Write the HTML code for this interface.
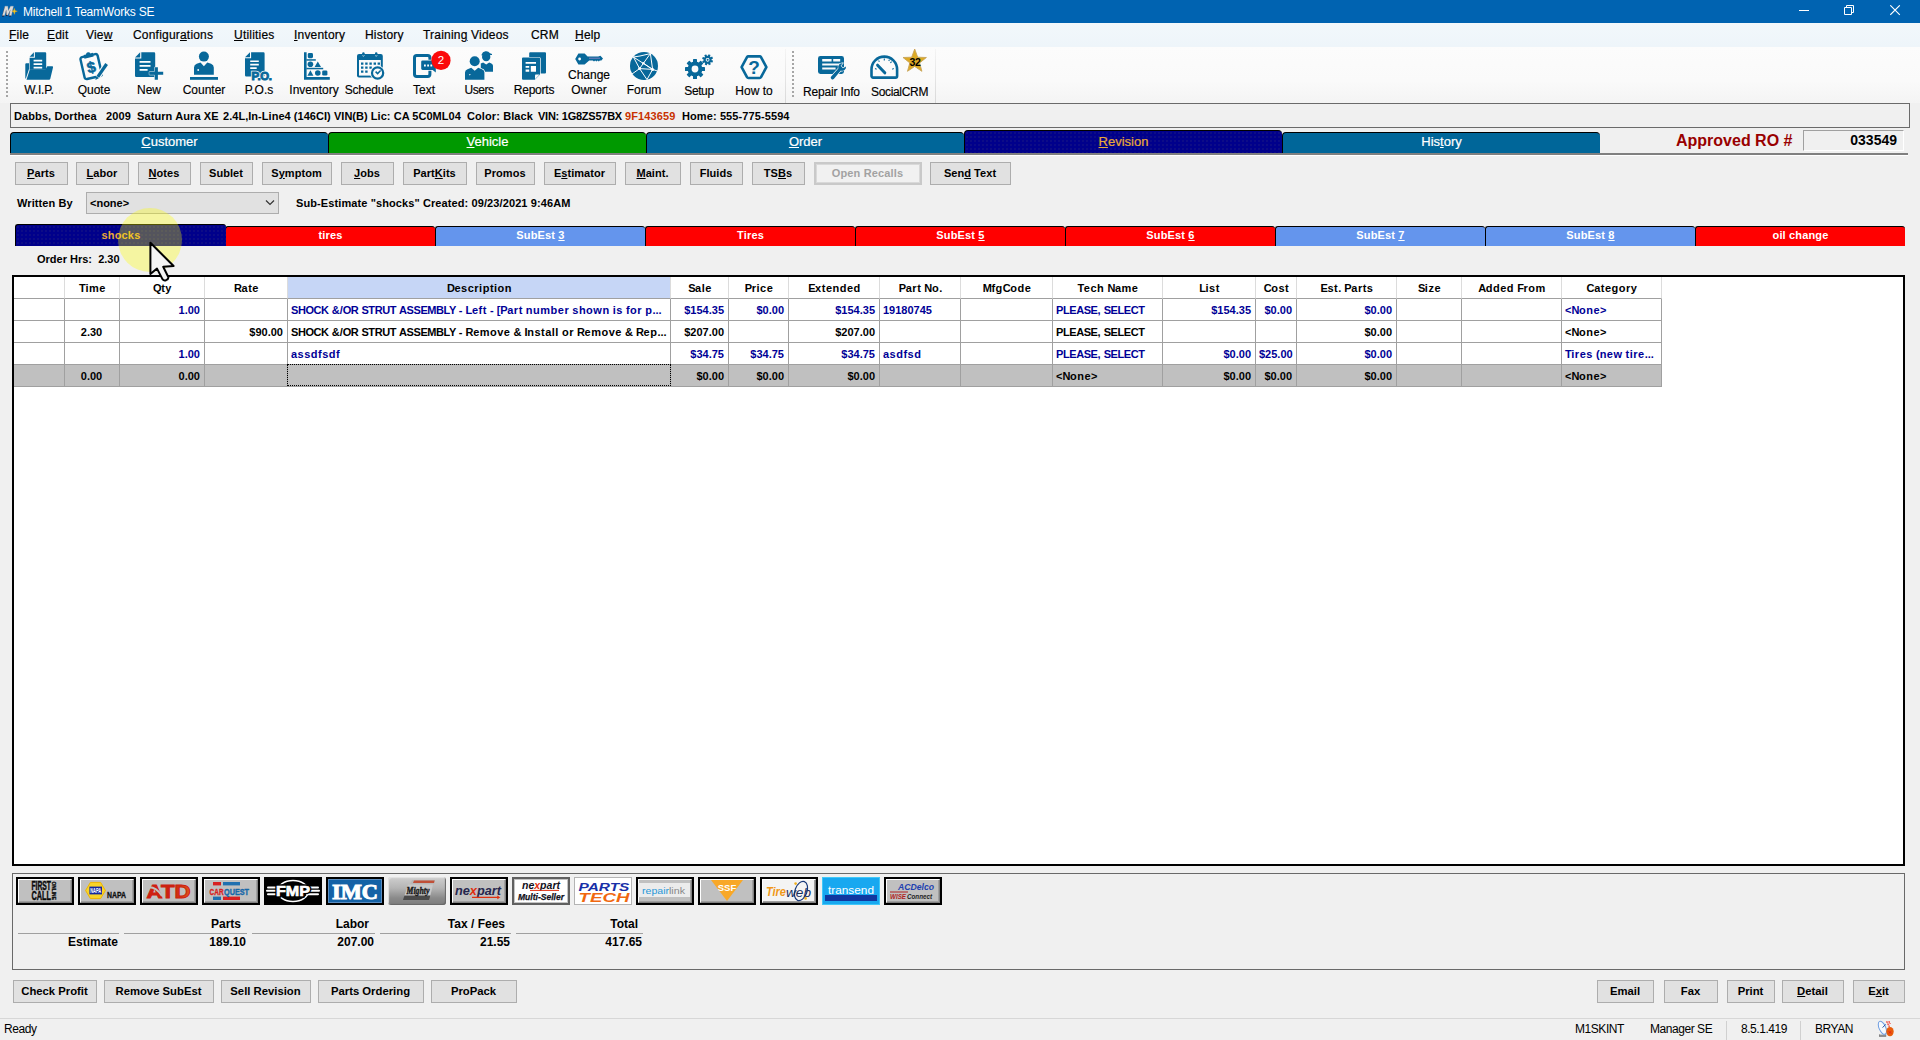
<!DOCTYPE html>
<html lang="en">
<head>
<meta charset="utf-8">
<title>Mitchell 1 TeamWorks SE</title>
<style>
*{box-sizing:border-box;margin:0;padding:0}
html,body{width:1920px;height:1040px;overflow:hidden}
body{position:relative;background:#f0f0f0;font-family:"Liberation Sans",Arial,sans-serif;font-size:11px;color:#000}
.abs{position:absolute}
u{text-decoration:underline;text-underline-offset:1px}
/* title bar */
#title{position:absolute;left:0;top:0;width:1920px;height:23px;background:#0063b1;color:#fff}
#title .cap{position:absolute;left:23px;top:5px;font-size:12px;line-height:14px;white-space:nowrap;letter-spacing:-0.22px}
/* menu */
#menu{position:absolute;left:0;top:23px;width:1920px;height:24px;background:linear-gradient(#f2f8fb,#eef5fa)}
#menu span{position:absolute;top:5px;font-size:12px;line-height:14px;white-space:nowrap;letter-spacing:.2px;-webkit-text-stroke:.2px #000}
/* toolbar */
#toolbar{position:absolute;left:0;top:47px;width:1920px;height:56px;background:linear-gradient(#fcfcfc,#fafafa 60%,#f4f4f4)}
#toolbar .ic{position:absolute;overflow:visible}
#toolbar .lbl{position:absolute;top:36px;width:56px;font-size:12px;line-height:14px;white-space:nowrap;text-align:center;-webkit-text-stroke:.15px #000}
.grip{position:absolute;width:2px;background:repeating-linear-gradient(#a6a6a6 0 2px,transparent 2px 4px)}
.tbsep{position:absolute;top:2px;width:1px;height:54px;background:linear-gradient(#f4f4f4,#d8d8d8)}
/* info */
#info{position:absolute;left:10px;top:103px;width:1900px;height:25px;border:1px solid #6a6a6a;border-right-color:#6a6a6a;background:#f0f0f0}
#info span{position:absolute;top:6px;letter-spacing:.1px;line-height:13px;font-weight:bold;font-size:11px;white-space:nowrap}
/* main tabs */
.mtab{-webkit-text-stroke:.2px currentColor;position:absolute;top:132px;height:21px;color:#fff;font-size:13px;line-height:17px;text-align:center;border-top:1px solid #000;border-left:1px solid #000;border-top-left-radius:4px;border-top-right-radius:4px}
.mtab.sel{top:130px;height:23px;line-height:21px;background-color:#00008b;background-image:radial-gradient(circle,rgba(150,140,90,.5) 0.5px,transparent 0.75px);background-size:4px 4px;color:#e8a838;z-index:2}
.tabline{position:absolute;left:10px;top:153px;width:1898px;height:3px;background:linear-gradient(#808080 0 66%,#fff 66%)}
.stab.sel{background-color:#00008b;background-image:radial-gradient(circle,rgba(150,140,90,.5) 0.5px,transparent 0.75px);background-size:4px 4px;color:#e8a838;z-index:2}
.btn.dis{border:2px solid #c9c9c9;box-shadow:inset 0 0 0 1px #d9d9d9;background:#f1f1f1;color:#a2a2a2;line-height:19px;letter-spacing:.15px}
/* buttons */
.btn{position:absolute;height:23px;border:1px solid #adadad;background:#e1e1e1;font-weight:bold;font-size:11px;line-height:21px;text-align:center;white-space:nowrap;text-indent:-1px;letter-spacing:.05px}
.btn2{position:absolute;height:23px;border:1px solid #adadad;background:#e1e1e1;font-weight:bold;font-size:11.3px;line-height:20px;text-align:center;white-space:nowrap;text-indent:-1px}
/* sub tabs */
.stab{position:absolute;top:226px;height:20px;width:210px;color:#fff;font-weight:bold;font-size:11px;line-height:16px;letter-spacing:.15px;text-align:center;border-top:1px solid #000;border-left:1px solid #000;border-top-left-radius:3px;border-top-right-radius:3px}
#panel{position:absolute;left:12px;top:873px;width:1893px;height:97px;border:1px solid #696969}
.vb{position:absolute;top:3px;width:58px;height:28px;background:#000}
.vb i{position:absolute;left:2px;top:2px;width:54px;height:24px;background:#c0c0c0;border:1px solid;border-color:#fff #808080 #808080 #fff;box-shadow:inset -1px -1px 0 #a0a0a0}
.vb svg{position:absolute;left:2px;top:2px;width:54px;height:24px}
.tl{position:absolute;top:59px;height:1px;background:#a0a0a0}
.tt{position:absolute;text-align:right;font-weight:bold;font-size:12px;line-height:14px;white-space:nowrap}
#status{position:absolute;left:0;top:1018px;width:1920px;height:22px;border-top:1px solid #d7d7d7;background:#f0f0f0}
#status span{position:absolute;top:3px;font-size:12px;line-height:14px;white-space:nowrap;letter-spacing:-.45px}
/* grid */
#grid{position:absolute;left:12px;top:275px;width:1893px;height:591px;background:#fff;border:2px solid #000}
.cell{position:absolute;height:22px;line-height:23px;font-weight:bold;font-size:11px;white-space:nowrap;overflow:hidden;border-right:1px solid #a0a0a0;border-bottom:1px solid #a0a0a0;padding:0 4px 0 3px}
.hd{text-align:center;padding:0 3px 0 4px;border-right:1px solid #dcdcdc;border-bottom:1px solid #a0a0a0}
b{font-weight:inherit}
.gu{letter-spacing:-.42px}
.gl{letter-spacing:.5px}
.lu{letter-spacing:-.3px}
.ll{letter-spacing:.3px}
.r{text-align:right}
.c{text-align:center}
.b{color:#000096}
.g{background:#c0c0c0}
</style>
</head>
<body>
<div id="title">
<svg class="abs" style="left:2px;top:5px" width="16" height="12" viewBox="0 0 16 12"><path d="M0.4 11L3 1.6H5.8L6.2 6.2L8.6 1.6H11.4L9.4 11H7.2L8.4 5.2L5.8 10.4H4.6L4.2 5.2L2.6 11Z" fill="#101030" transform="translate(-.5 .5)"/><path d="M0.4 10.6L3 1.2H5.8L6.2 5.8L8.6 1.2H11.4L9.4 10.6H7.2L8.4 4.8L5.8 10H4.6L4.2 4.8L2.6 10.6Z" fill="#dcdcdc" stroke="#b8b8b8" stroke-width=".3"/><path d="M12.4 3.2L13 5.4L15.4 6.2L13 7L12.4 9.4L11.6 7L9.8 6.2L11.6 5.4Z" fill="#f6c81c" stroke="#e8a020" stroke-width=".3"/></svg>
<span class="cap">Mitchell 1 TeamWorks SE</span>
<svg class="abs" style="left:1799px;top:5px" width="12" height="12" viewBox="0 0 12 12"><path d="M0 5.5H10" stroke="#fff" stroke-width="1" fill="none"/></svg>
<svg class="abs" style="left:1844px;top:5px" width="12" height="12" viewBox="0 0 12 12"><path d="M0.5 2.5H7.5V9.5H0.5Z M2.5 2.5V0.5H9.5V7.5H7.5" stroke="#fff" stroke-width="1" fill="none"/></svg>
<svg class="abs" style="left:1890px;top:5px" width="12" height="12" viewBox="0 0 12 12"><path d="M0.3 0.3L9.8 9.8M9.8 0.3L0.3 9.8" stroke="#fff" stroke-width="1.1" fill="none"/></svg>
</div>
<div id="menu">
<span style="left:9px"><u>F</u>ile</span>
<span style="left:47px"><u>E</u>dit</span>
<span style="left:86px">Vie<u>w</u></span>
<span style="left:133px">Configur<u>a</u>tions</span>
<span style="left:234px"><u>U</u>tilities</span>
<span style="left:294px"><u>I</u>nventory</span>
<span style="left:365px">History</span>
<span style="left:423px">Trainin<u>g</u> Videos</span>
<span style="left:531px">CRM</span>
<span style="left:575px"><u>H</u>elp</span>
</div>
<div id="toolbar">
<div class="grip" style="left:6px;top:4px;height:46px"></div>
<div class="tbsep" style="left:785px"></div>
<div class="grip" style="left:792px;top:4px;height:46px"></div>
<div class="tbsep" style="left:935px"></div>
<!-- W.I.P. -->
<svg class="ic" style="left:25px;top:5px" width="28" height="28" viewBox="0 0 28 28"><g fill="#08689a">
<path d="M0.3 12.3a1 1 0 0 1 1-1H4V17L0.9 26.5H0.3Z"/>
<path d="M9.9 0.3H20.2a1 1 0 0 1 1 1V17.6H4.6V5.7H9.9Z"/>
<path d="M4.6 4.7L8.9 0.3V4.7Z"/>
<path d="M4.9 17.3H20.6L22.3 14.3H27a1 1 0 0 1 1 1.3L25.3 26.8a1.4 1.4 0 0 1-1.3 1H1.5Z"/>
</g><path d="M8.6 7.8h8.6v1.7H8.6zM8.6 11.3h8.6v1.7H8.6zM8.6 14.8h8.6v1.7H8.6z" fill="#fff"/></svg>
<span class="lbl" style="left:11px;letter-spacing:-.2px">W.I.P.</span>
<!-- Quote -->
<svg class="ic" style="left:80px;top:4px" width="28" height="30" viewBox="0 0 28 30"><g transform="rotate(-13 11 15)">
<rect x="2.2" y="4.4" width="17.6" height="22.4" rx="2" fill="none" stroke="#08689a" stroke-width="2.4"/>
<path d="M6.3 2.6h2.4a2.4 2.4 0 0 1 4.6 0h2.4v3.8H6.3z" fill="#08689a"/>
<text x="11" y="21.8" font-family="Liberation Sans,sans-serif" font-weight="bold" font-size="15.5" text-anchor="middle" fill="#08689a" stroke="#08689a" stroke-width=".5">$</text></g>
<path d="M26.4 13.4L17.6 26.2" stroke="#fafafa" stroke-width="5.4"/><path d="M26.6 13L17.8 25.8" stroke="#08689a" stroke-width="3.2"/><path d="M15.4 29L16.2 25.4L18.8 27.2Z" fill="#08689a"/></svg>
<span class="lbl" style="left:66px">Quote</span>
<!-- New -->
<svg class="ic" style="left:135px;top:5px" width="29" height="28" viewBox="0 0 29 28"><g fill="#08689a">
<path d="M6.3 0.2H19a1.2 1.2 0 0 1 1.2 1.2V23.8a1.2 1.2 0 0 1-1.2 1.2H1.2A1.2 1.2 0 0 1 0 23.8V6.5H6.3Z"/>
<path d="M0 5.4L5.2 0.2V5.4Z"/></g>
<path d="M4.6 8.9h10.9v1.8H4.6zM4.6 13h10.9v1.8H4.6zM4.6 17h8v1.8H4.6z" fill="#fff"/>
<path d="M19.7 15.2h3.2v4.6h5.3v3h-5.3v5h-3.2v-5h-5.4v-3h5.4z" fill="#08689a" stroke="#fafafa" stroke-width="0.9" paint-order="stroke"/></svg>
<span class="lbl" style="left:121px">New</span>
<!-- Counter -->
<svg class="ic" style="left:190px;top:5px" width="28" height="28" viewBox="0 0 28 28"><g fill="#08689a">
<circle cx="13.9" cy="4.6" r="5"/>
<path d="M4 22.7V15.5a4 4 0 0 1 2.7-3.8L10.5 10.6L13.9 14.2L17.3 10.6L21.1 11.7a4 4 0 0 1 2.7 3.8V22.7Z"/>
<rect x="0" y="25" width="28" height="2.8"/></g>
<circle cx="8.2" cy="18" r="0.9" fill="#fff"/></svg>
<span class="lbl" style="left:176px">Counter</span>
<!-- P.O.s -->
<svg class="ic" style="left:245px;top:5px" width="29" height="28" viewBox="0 0 29 28"><g fill="#08689a">
<path d="M6.1 0.2H18.4a1.2 1.2 0 0 1 1.2 1.2V23.2a1.2 1.2 0 0 1-1.2 1.2H1.2A1.2 1.2 0 0 1 0 23.2V6.3H6.1Z"/>
<path d="M0 5.2L5 0.2V5.2Z"/></g>
<path d="M5.2 8.4h8.6v1.7H5.2zM5.2 11.8h8.6v1.7H5.2zM5.2 15.2h6.5v1.7H5.2z" fill="#fff"/>
<text x="6.6" y="27.8" font-family="Liberation Sans,sans-serif" font-weight="bold" font-size="11.4" letter-spacing="-0.3" stroke="#fafafa" stroke-width="2.4" fill="#fafafa">P.O.</text><text x="6.6" y="27.8" font-family="Liberation Sans,sans-serif" font-weight="bold" font-size="11.4" letter-spacing="-0.3" fill="#08689a" stroke="#08689a" stroke-width=".9">P.O.</text></svg>
<span class="lbl" style="left:231px">P.O.s</span>
<!-- Inventory -->
<svg class="ic" style="left:304px;top:5px" width="26" height="28" viewBox="0 0 26 28"><g fill="#08689a">
<path d="M0 0.3H2.6V25H25.8V27.8H0Z"/>
<rect x="2.4" y="7.2" width="9.4" height="1.5"/><rect x="2.4" y="15.8" width="16.8" height="1.5"/>
<rect x="3.8" y="1" width="5.2" height="5.2" rx="1.4"/>
<circle cx="6.4" cy="12.2" r="2.8"/><path d="M10.6 15L13.8 9.4L17 15Z"/>
<path d="M3.4 23.8L6.4 18.2L9.4 23.8Z"/><circle cx="13.8" cy="21" r="2.8"/><rect x="18.2" y="18.4" width="5.2" height="5.2" rx="1.4"/>
</g></svg>
<span class="lbl" style="left:286px">Inventory</span>
<!-- Schedule -->
<svg class="ic" style="left:357px;top:5px" width="29" height="29" viewBox="0 0 29 29"><g fill="#08689a">
<path d="M2 2H23.8a2 2 0 0 1 2 2V23.5a2 2 0 0 1-2 2H2a2 2 0 0 1-2-2V4a2 2 0 0 1 2-2Z"/>
<rect x="5.2" y="0.2" width="2.4" height="4.6" rx="1.1"/><rect x="18" y="0.2" width="2.4" height="4.6" rx="1.1"/></g>
<rect x="2" y="8" width="21.8" height="15.6" fill="#fafafa"/>
<path d="M4 10.4h2.4v2.4H4zM8.2 10.4h2.4v2.4H8.2zM12.4 10.4h2.4v2.4h-2.4zM16.6 10.4H19v2.4h-2.4zM20.6 10.4H23v2.4h-2.4zM4 14.4h2.4v2.4H4zM8.2 14.4h2.4v2.4H8.2zM12.4 14.4h2.4v2.4h-2.4zM4 18.4h2.4v2.4H4zM8.2 18.4h2.4v2.4H8.2z" fill="#08689a"/>
<path d="M5.6 3.4L6.4 4.4L7.4 3.2M18.4 3.4L19.2 4.4L20.2 3.2" stroke="#fafafa" stroke-width=".7" fill="none"/>
<circle cx="20.6" cy="21" r="7.6" fill="#fafafa"/><circle cx="20.6" cy="21" r="5.6" fill="#fafafa" stroke="#08689a" stroke-width="2.2"/>
<path d="M18.6 19.6L20.6 21.6L23.6 18.4" stroke="#08689a" stroke-width="1.5" fill="none"/></svg>
<span class="lbl" style="left:341px;letter-spacing:-.2px">Schedule</span>
<!-- Text -->
<svg class="ic" style="left:413px;top:5px" width="40" height="29" viewBox="0 0 40 29">
<rect x="1.5" y="3.5" width="15.4" height="21" rx="2.2" fill="none" stroke="#08689a" stroke-width="3"/>
<path d="M9.6 8.4H21.4a1.4 1.4 0 0 1 1.4 1.4V20.4L19.6 18H9.6a1.4 1.4 0 0 1-1.4-1.4V9.8a1.4 1.4 0 0 1 1.4-1.4Z" fill="#08689a" stroke="#fafafa" stroke-width="1.4" paint-order="stroke"/>
<path d="M11 12.6h1.8v1.8H11zM14.2 12.6H16v1.8h-1.8zM17.4 12.6h1.8v1.8h-1.8z" fill="#fff"/>
<circle cx="28" cy="8.4" r="9.6" fill="#fb0a0a"/>
<text x="28" y="12.4" font-family="Liberation Sans,sans-serif" font-size="11.5" text-anchor="middle" fill="#fff">2</text></svg>
<span class="lbl" style="left:396px">Text</span>
<!-- Users -->
<svg class="ic" style="left:465px;top:5px" width="28" height="28" viewBox="0 0 28 28"><g fill="#08689a">
<circle cx="21.2" cy="5" r="4.2"/><path d="M16.6 2.6a4.8 4.8 0 0 1 8.4-1.4l2 0.8v0.9L16.6 3.4Z"/>
<path d="M15.8 11.6L18.2 10.4L21.2 12.6L24.2 10.4L26.4 11.4a2.6 2.6 0 0 1 1.6 2.4V19.8H15.8Z"/>
<g stroke="#fafafa" stroke-width="1.3" paint-order="stroke"><circle cx="9.7" cy="9.2" r="5"/>
<path d="M0 27.8V20.6a3.6 3.6 0 0 1 2.5-3.4L6.2 15.8L9.7 18.8L13.2 15.8L16.9 17.2a3.6 3.6 0 0 1 2.5 3.4V27.8Z"/></g></g>
<path d="M3.8 22.2h2l-1 1.4z" fill="#fff"/></svg>
<span class="lbl" style="left:451px;letter-spacing:-.5px">Users</span>
<!-- Reports -->
<svg class="ic" style="left:522px;top:5px" width="25" height="28" viewBox="0 0 25 28"><g fill="#08689a">
<path d="M8.2 0.3H23a1 1 0 0 1 1 1V20.5a1 1 0 0 1-1 1H7.2V1.3a1 1 0 0 1 1-1Z"/>
<path d="M1 5.6H17a1 1 0 0 1 1 1V22.6L12.8 27.8H1a1 1 0 0 1-1-1V6.6a1 1 0 0 1 1-1Z" stroke="#fafafa" stroke-width="1.4" paint-order="stroke"/></g>
<path d="M3.6 10h10.4v1.8H3.6zM3.6 14h3.6v1.8H3.6zM8.8 14H14v5.8H8.8zM3.6 17.6h3.6v2.2H3.6z" fill="#fff"/>
<path d="M13 27.2V23.4a.8 .8 0 0 1 .8-.8h3.8Z" fill="#fafafa"/></svg>
<span class="lbl" style="left:506px;letter-spacing:-.25px">Reports</span>
<!-- Change Owner -->
<svg class="ic" style="left:575px;top:6px" width="28" height="12" viewBox="0 0 28 12"><g fill="#08689a">
<path d="M3.4 0.4H9.6L12.6 3.6H23.2L25.4 2.8L28 5.4L26.4 7.4H24.8L23.8 8.4L22.6 7.4L21.4 8.4L20.2 7.4L19 8.4L17.8 7.4H14.2L9.6 11.6H3.4L0.2 6Z"/></g>
<circle cx="4.6" cy="6" r="1.4" fill="#fff"/><path d="M14 5.2H25" stroke="#b48ad0" stroke-width=".7"/></svg>
<span class="lbl" style="left:561px;top:21px">Change</span>
<span class="lbl" style="left:561px">Owner</span>
<!-- Forum -->
<svg class="ic" style="left:630px;top:5px" width="28" height="28" viewBox="0 0 28 28">
<circle cx="14" cy="14" r="14" fill="#08689a"/>
<g stroke="#fff" stroke-width="1" fill="none"><path d="M3.4 5L22.6 17.4M22.6 17.4L20.4 1.6M20.4 1.6L9.6 16.6M9.6 16.6L22.6 17.4M9.6 16.6L2 22M9.6 16.6L3.4 5M22.6 17.4L17 27.6M20.4 1.6L10 4M22.6 17.4L27.4 19M9.6 16.6L17 27.6M3.4 5L10 4M13.4 11.2L22.6 17.4"/></g>
<g fill="#fff"><circle cx="22.6" cy="17.4" r="1.5"/><circle cx="9.6" cy="16.6" r="1.4"/><circle cx="13.4" cy="11.2" r="1.2"/></g></svg>
<span class="lbl" style="left:616px">Forum</span>
<!-- Setup -->
<svg class="ic" style="left:685px;top:7px" width="28" height="25" viewBox="0 0 28 25">
<g transform="translate(10 15)"><circle r="5.4" fill="none" stroke="#08689a" stroke-width="4"/>
<g fill="#08689a"><rect x="-2" y="-10" width="4" height="5" rx=".6"/><rect x="-2" y="-10" width="4" height="5" rx=".6" transform="rotate(45)"/><rect x="-2" y="-10" width="4" height="5" rx=".6" transform="rotate(90)"/><rect x="-2" y="-10" width="4" height="5" rx=".6" transform="rotate(135)"/><rect x="-2" y="-10" width="4" height="5" rx=".6" transform="rotate(180)"/><rect x="-2" y="-10" width="4" height="5" rx=".6" transform="rotate(225)"/><rect x="-2" y="-10" width="4" height="5" rx=".6" transform="rotate(270)"/><rect x="-2" y="-10" width="4" height="5" rx=".6" transform="rotate(315)"/></g></g>
<g transform="translate(22.6 5.8) rotate(20)"><circle r="2.9" fill="none" stroke="#08689a" stroke-width="2.1"/><circle r="1" fill="#08689a"/>
<g fill="#08689a"><rect x="-1.1" y="-5.5" width="2.2" height="2.6" rx=".4"/><rect x="-1.1" y="-5.5" width="2.2" height="2.6" rx=".4" transform="rotate(45)"/><rect x="-1.1" y="-5.5" width="2.2" height="2.6" rx=".4" transform="rotate(90)"/><rect x="-1.1" y="-5.5" width="2.2" height="2.6" rx=".4" transform="rotate(135)"/><rect x="-1.1" y="-5.5" width="2.2" height="2.6" rx=".4" transform="rotate(180)"/><rect x="-1.1" y="-5.5" width="2.2" height="2.6" rx=".4" transform="rotate(225)"/><rect x="-1.1" y="-5.5" width="2.2" height="2.6" rx=".4" transform="rotate(270)"/><rect x="-1.1" y="-5.5" width="2.2" height="2.6" rx=".4" transform="rotate(315)"/></g></g></svg>
<span class="lbl" style="left:671px;top:37px;letter-spacing:-.4px">Setup</span>
<!-- How to -->
<svg class="ic" style="left:740px;top:8px" width="28" height="25" viewBox="0 0 28 25">
<path d="M1.6 12.2L7 2.2a1.6 1.6 0 0 1 1.4-.8H19.6a1.6 1.6 0 0 1 1.4.8L26.4 12.2L21 22.2a1.6 1.6 0 0 1-1.4.8H8.4a1.6 1.6 0 0 1-1.4-.8Z" fill="none" stroke="#08689a" stroke-width="2.6" stroke-linejoin="round"/>
<text x="14" y="19.2" font-family="Liberation Sans,sans-serif" font-weight="bold" font-size="19" text-anchor="middle" fill="#08689a">?</text></svg>
<span class="lbl" style="left:726px;top:37px">How to</span>
<!-- Repair Info -->
<svg class="ic" style="left:818px;top:9px" width="29" height="26" viewBox="0 0 29 26">
<rect x="1.2" y="1.2" width="23.6" height="15.6" rx="1.2" fill="none" stroke="#08689a" stroke-width="2.4"/>
<rect x="2" y="2" width="22" height="14" fill="#08689a"/>
<path d="M4.2 3H13.6V5.6H4.2zM15.2 3H22.2V5.6H15.2zM4.2 7.6H22.2V9.5H4.2zM4.2 11.6H17.6V13.5H4.2z" fill="#fafafa"/>
<path d="M28 10.4a4 4 0 0 1-5.2 4.2L16 22.8a1.8 1.8 0 0 1-2.8-2.4L20.4 12.4a4 4 0 0 1 4.4-5.2L22.6 9.8L25 12.2Z" fill="#08689a" stroke="#fafafa" stroke-width="1.2" paint-order="stroke"/></svg>
<span class="lbl" style="left:803px;top:38px;letter-spacing:-.17px">Repair Info</span>
<!-- SocialCRM -->
<svg class="ic" style="left:870px;top:8px" width="29" height="25" viewBox="0 0 29 25">
<path d="M1.5 21V14.4A12.8 12.8 0 0 1 27.1 14.4V21a1.6 1.6 0 0 1-1.6 1.6H3.1A1.6 1.6 0 0 1 1.5 21Z" fill="none" stroke="#08689a" stroke-width="2.6" stroke-linejoin="round"/>
<path d="M7.6 10.2L14.8 17.8" stroke="#08689a" stroke-width="3" stroke-linecap="round"/>
<path d="M14.3 3.6V5.4M5 13.6L6.6 14.2M21.6 6.6L20.4 8M23.8 13.6L22.2 14.2M8.6 5.4L9.4 6.8M19.4 4.6L18.8 6" stroke="#08689a" stroke-width="1.1"/></svg>
<svg class="ic" style="left:900px;top:-1px" width="30" height="30" viewBox="0 0 30 30">
<path d="M14.7 3.0L17.7 11.2L26.4 11.5L19.6 16.9L21.9 25.3L14.7 20.4L7.5 25.3L9.8 16.9L3.0 11.5L11.7 11.2Z" fill="#ddaa24" stroke="#c8a458" stroke-width=".9" stroke-linejoin="round"/>
<text x="14.9" y="19.6" font-family="Liberation Sans,sans-serif" font-weight="bold" font-size="10.5" text-anchor="middle" fill="#000" letter-spacing="-.4">32</text></svg>
<span class="lbl" style="left:871px;top:38px;letter-spacing:-.33px">SocialCRM</span>
</div>
<div id="info">
<span style="left:3px">Dabbs, Dorthea</span>
<span style="left:95px">2009</span>
<span style="left:126px">Saturn Aura XE</span>
<span style="left:212px;letter-spacing:.04px">2.4L,In-Line4 (146CI) VIN(B) Lic: CA 5C0ML04</span>
<span style="left:456px">Color: Black</span>
<span style="left:527px;letter-spacing:-.25px">VIN: 1G8ZS57BX</span>
<span style="left:614px;color:#c83200">9F143659</span>
<span style="left:671px">Home: 555-775-5594</span>
</div>
<!-- main tabs -->
<div class="tabline"></div>
<div class="mtab" style="left:10px;width:318px;background:#006699"><u>C</u>ustomer</div>
<div class="mtab" style="left:328px;width:318px;background:#009900"><u>V</u>ehicle</div>
<div class="mtab" style="left:646px;width:318px;background:#006699"><u>O</u>rder</div>
<div class="mtab sel" style="left:964px;width:318px"><u>R</u>evision</div>
<div class="mtab" style="left:1282px;width:318px;background:#006699">His<u>t</u>ory</div>
<div class="abs" style="left:1676px;top:132px;font-size:16px;font-weight:bold;line-height:18px;color:#990000;white-space:nowrap">Approved RO #</div>
<div class="abs" style="left:1803px;top:130px;width:101px;height:21px;border:1px solid #a0a0a0;border-right-color:#fff;border-bottom-color:#fff;font-size:14px;font-weight:bold;line-height:19px;text-align:right;padding-right:6px">033549</div>
<!-- buttons row -->
<div class="btn" style="left:15px;top:162px;width:53px"><u>P</u>arts</div>
<div class="btn" style="left:76px;top:162px;width:53px"><u>L</u>abor</div>
<div class="btn" style="left:138px;top:162px;width:53px"><u>N</u>otes</div>
<div class="btn" style="left:200px;top:162px;width:53px">Sublet</div>
<div class="btn" style="left:262px;top:162px;width:70px">S<u>y</u>mptom</div>
<div class="btn" style="left:341px;top:162px;width:53px"><u>J</u>obs</div>
<div class="btn" style="left:403px;top:162px;width:64px">Part<u>K</u>its</div>
<div class="btn" style="left:476px;top:162px;width:59px">Promos</div>
<div class="btn" style="left:544px;top:162px;width:72px">E<u>s</u>timator</div>
<div class="btn" style="left:625px;top:162px;width:56px"><u>M</u>aint.</div>
<div class="btn" style="left:690px;top:162px;width:53px">Fluids</div>
<div class="btn" style="left:752px;top:162px;width:53px">TS<u>B</u>s</div>
<div class="btn dis" style="left:814px;top:162px;width:108px">Open Recalls</div>
<div class="btn" style="left:930px;top:162px;width:81px">Sen<u>d</u> Text</div>
<!-- written by -->
<div class="abs" style="left:17px;top:197px;font-weight:bold;line-height:13px;white-space:nowrap;letter-spacing:.1px">Written By</div>
<div class="abs" style="left:86px;top:192px;width:193px;height:22px;border:1px solid #adadad;background:#e1e1e1;font-weight:bold;line-height:20px;padding-left:3px">&lt;none&gt;
<svg class="abs" style="left:178px;top:7px" width="10" height="6" viewBox="0 0 10 6"><path d="M1 0.5L5 4.5L9 0.5" stroke="#333" stroke-width="1.2" fill="none"/></svg></div>
<div class="abs" style="left:296px;top:197px;font-weight:bold;line-height:13px;white-space:nowrap;letter-spacing:.1px">Sub-Estimate "shocks" Created: 09/23/2021 9:46AM</div>
<!-- sub tabs -->
<div class="stab sel" style="left:15px;top:224px;height:22px;line-height:20px;width:211px">shocks</div>
<div class="stab" style="left:225px;background:#ff0000">tires</div>
<div class="stab" style="left:435px;background:#6495ed">SubEst <u>3</u></div>
<div class="stab" style="left:645px;background:#ff0000">Tires</div>
<div class="stab" style="left:855px;background:#ff0000">SubEst <u>5</u></div>
<div class="stab" style="left:1065px;background:#ff0000">SubEst <u>6</u></div>
<div class="stab" style="left:1275px;background:#6495ed">SubEst <u>7</u></div>
<div class="stab" style="left:1485px;background:#6495ed">SubEst <u>8</u></div>
<div class="stab" style="left:1695px;background:#ff0000">oil change</div>
<div class="abs" style="left:37px;top:253px;font-weight:bold;line-height:13px;white-space:nowrap">Order Hrs:&nbsp; 2.30</div>
<div id="grid">
<div class="cell hd" style="left:0px;top:0;width:51px;height:22px"></div>
<div class="cell hd" style="left:51px;top:0;width:55px;height:22px"><b class="gu">T</b><b class="gl">ime</b></div>
<div class="cell hd" style="left:106px;top:0;width:85px;height:22px"><b class="gu">Q</b><b class="gl">ty</b></div>
<div class="cell hd" style="left:191px;top:0;width:83px;height:22px"><b class="gu">R</b><b class="gl">ate</b></div>
<div class="cell hd" style="left:274px;top:0;width:383px;height:22px;background:#c6d6f6"><b class="gu">D</b><b class="gl">escription</b></div>
<div class="cell hd" style="left:657px;top:0;width:58px;height:22px"><b class="gu">S</b><b class="gl">ale</b></div>
<div class="cell hd" style="left:715px;top:0;width:60px;height:22px"><b class="gu">P</b><b class="gl">rice</b></div>
<div class="cell hd" style="left:775px;top:0;width:91px;height:22px"><b class="gu">E</b><b class="gl">xtended</b></div>
<div class="cell hd" style="left:866px;top:0;width:81px;height:22px"><b class="gu">P</b><b class="gl">art</b> <b class="gu">N</b><b class="gl">o</b>.</div>
<div class="cell hd" style="left:947px;top:0;width:92px;height:22px"><b class="gu">M</b><b class="gl">fg</b><b class="gu">C</b><b class="gl">ode</b></div>
<div class="cell hd" style="left:1039px;top:0;width:110px;height:22px"><b class="gu">T</b><b class="gl">ech</b> <b class="gu">N</b><b class="gl">ame</b></div>
<div class="cell hd" style="left:1149px;top:0;width:93px;height:22px"><b class="gu">L</b><b class="gl">ist</b></div>
<div class="cell hd" style="left:1242px;top:0;width:41px;height:22px"><b class="gu">C</b><b class="gl">ost</b></div>
<div class="cell hd" style="left:1283px;top:0;width:100px;height:22px"><b class="gu">E</b><b class="gl">st</b>. <b class="gu">P</b><b class="gl">arts</b></div>
<div class="cell hd" style="left:1383px;top:0;width:65px;height:22px"><b class="gu">S</b><b class="gl">ize</b></div>
<div class="cell hd" style="left:1448px;top:0;width:100px;height:22px"><b class="gu">A</b><b class="gl">dded</b> <b class="gu">F</b><b class="gl">rom</b></div>
<div class="cell hd" style="left:1548px;top:0;width:100px;height:22px"><b class="gu">C</b><b class="gl">ategory</b></div>
<div class="cell b" style="left:0px;top:22px;width:51px"></div>
<div class="cell b c" style="left:51px;top:22px;width:55px"></div>
<div class="cell b r" style="left:106px;top:22px;width:85px">1.00</div>
<div class="cell b r" style="left:191px;top:22px;width:83px"></div>
<div class="cell b" style="left:274px;top:22px;width:383px"><b class="gu">SHOCK</b> &amp;/<b class="gu">OR</b> <b class="gu">STRUT</b> <b class="gu">ASSEMBLY</b> - <b class="gu">L</b><b class="gl">eft</b> - [<b class="gu">P</b><b class="gl">art</b> <b class="gl">number</b> <b class="gl">shown</b> <b class="gl">is</b> <b class="gl">for</b> <b class="gl">p</b>...</div>
<div class="cell b r" style="left:657px;top:22px;width:58px">$154.35</div>
<div class="cell b r" style="left:715px;top:22px;width:60px">$0.00</div>
<div class="cell b r" style="left:775px;top:22px;width:91px">$154.35</div>
<div class="cell b" style="left:866px;top:22px;width:81px">19180745</div>
<div class="cell b" style="left:947px;top:22px;width:92px"></div>
<div class="cell b" style="left:1039px;top:22px;width:110px"><b class="gu">PLEASE</b>, <b class="gu">SELECT</b></div>
<div class="cell b r" style="left:1149px;top:22px;width:93px">$154.35</div>
<div class="cell b r" style="left:1242px;top:22px;width:41px">$0.00</div>
<div class="cell b r" style="left:1283px;top:22px;width:100px">$0.00</div>
<div class="cell b" style="left:1383px;top:22px;width:65px"></div>
<div class="cell b" style="left:1448px;top:22px;width:100px"></div>
<div class="cell b" style="left:1548px;top:22px;width:100px">&lt;<b class="gu">N</b><b class="gl">one</b>&gt;</div>
<div class="cell" style="left:0px;top:44px;width:51px"></div>
<div class="cell c" style="left:51px;top:44px;width:55px">2.30</div>
<div class="cell r" style="left:106px;top:44px;width:85px"></div>
<div class="cell r" style="left:191px;top:44px;width:83px">$90.00</div>
<div class="cell" style="left:274px;top:44px;width:383px"><b class="gu">SHOCK</b> &amp;/<b class="gu">OR</b> <b class="gu">STRUT</b> <b class="gu">ASSEMBLY</b> - <b class="gu">R</b><b class="gl">emove</b> &amp; <b class="gu">I</b><b class="gl">nstall</b> <b class="gl">or</b> <b class="gu">R</b><b class="gl">emove</b> &amp; <b class="gu">R</b><b class="gl">ep</b>...</div>
<div class="cell r" style="left:657px;top:44px;width:58px">$207.00</div>
<div class="cell r" style="left:715px;top:44px;width:60px"></div>
<div class="cell r" style="left:775px;top:44px;width:91px">$207.00</div>
<div class="cell" style="left:866px;top:44px;width:81px"></div>
<div class="cell" style="left:947px;top:44px;width:92px"></div>
<div class="cell" style="left:1039px;top:44px;width:110px"><b class="gu">PLEASE</b>, <b class="gu">SELECT</b></div>
<div class="cell r" style="left:1149px;top:44px;width:93px"></div>
<div class="cell r" style="left:1242px;top:44px;width:41px"></div>
<div class="cell r" style="left:1283px;top:44px;width:100px">$0.00</div>
<div class="cell" style="left:1383px;top:44px;width:65px"></div>
<div class="cell" style="left:1448px;top:44px;width:100px"></div>
<div class="cell" style="left:1548px;top:44px;width:100px">&lt;<b class="gu">N</b><b class="gl">one</b>&gt;</div>
<div class="cell b" style="left:0px;top:66px;width:51px"></div>
<div class="cell b c" style="left:51px;top:66px;width:55px"></div>
<div class="cell b r" style="left:106px;top:66px;width:85px">1.00</div>
<div class="cell b r" style="left:191px;top:66px;width:83px"></div>
<div class="cell b" style="left:274px;top:66px;width:383px"><b class="gl">assdfsdf</b></div>
<div class="cell b r" style="left:657px;top:66px;width:58px">$34.75</div>
<div class="cell b r" style="left:715px;top:66px;width:60px">$34.75</div>
<div class="cell b r" style="left:775px;top:66px;width:91px">$34.75</div>
<div class="cell b" style="left:866px;top:66px;width:81px"><b class="gl">asdfsd</b></div>
<div class="cell b" style="left:947px;top:66px;width:92px"></div>
<div class="cell b" style="left:1039px;top:66px;width:110px"><b class="gu">PLEASE</b>, <b class="gu">SELECT</b></div>
<div class="cell b r" style="left:1149px;top:66px;width:93px">$0.00</div>
<div class="cell b r" style="left:1242px;top:66px;width:41px">$25.00</div>
<div class="cell b r" style="left:1283px;top:66px;width:100px">$0.00</div>
<div class="cell b" style="left:1383px;top:66px;width:65px"></div>
<div class="cell b" style="left:1448px;top:66px;width:100px"></div>
<div class="cell b" style="left:1548px;top:66px;width:100px"><b class="gu">T</b><b class="gl">ires</b> (<b class="gl">new</b> <b class="gl">tire</b>...</div>
<div class="cell g" style="left:0px;top:88px;width:51px"></div>
<div class="cell g c" style="left:51px;top:88px;width:55px">0.00</div>
<div class="cell g r" style="left:106px;top:88px;width:85px">0.00</div>
<div class="cell g r" style="left:191px;top:88px;width:83px"></div>
<div class="cell g" style="left:274px;top:88px;width:383px"></div>
<div class="cell g r" style="left:657px;top:88px;width:58px">$0.00</div>
<div class="cell g r" style="left:715px;top:88px;width:60px">$0.00</div>
<div class="cell g r" style="left:775px;top:88px;width:91px">$0.00</div>
<div class="cell g" style="left:866px;top:88px;width:81px"></div>
<div class="cell g" style="left:947px;top:88px;width:92px"></div>
<div class="cell g" style="left:1039px;top:88px;width:110px">&lt;<b class="gu">N</b><b class="gl">one</b>&gt;</div>
<div class="cell g r" style="left:1149px;top:88px;width:93px">$0.00</div>
<div class="cell g r" style="left:1242px;top:88px;width:41px">$0.00</div>
<div class="cell g r" style="left:1283px;top:88px;width:100px">$0.00</div>
<div class="cell g" style="left:1383px;top:88px;width:65px"></div>
<div class="cell g" style="left:1448px;top:88px;width:100px"></div>
<div class="cell g" style="left:1548px;top:88px;width:100px">&lt;<b class="gu">N</b><b class="gl">one</b>&gt;</div>
<div class="abs" style="left:273px;top:87px;width:384px;height:22px;border:1px dotted #000"></div>
</div>
<div id="panel">
<!-- vendor buttons -->
<div class="vb" style="left:3px"><i></i><svg viewBox="0 0 54 24"><g font-family="Liberation Sans,sans-serif" font-weight="bold" fill="#0a0a0a" stroke="#0a0a0a" stroke-width=".45"><text x="13.5" y="10.6" font-size="12" textLength="19.5" lengthAdjust="spacingAndGlyphs">FIRST</text><text x="13.5" y="20.6" font-size="12" textLength="19.5" lengthAdjust="spacingAndGlyphs">CALL</text><text font-size="6" stroke-width=".3" textLength="18.5" lengthAdjust="spacingAndGlyphs" transform="translate(34 2.4) rotate(90)">ONLINE</text></g></svg></div>
<div class="vb" style="left:65px"><i></i><svg viewBox="0 0 54 24"><path d="M5.6 11.5L10.4 3.4H20.6L25.4 11.5L20.6 19.6H10.4Z" fill="#f8d428" stroke="#f0b400" stroke-width="1"/><rect x="9.4" y="7.6" width="12.6" height="7.8" fill="#1428a0"/><text x="15.7" y="14" font-family="Liberation Sans,sans-serif" font-weight="bold" font-size="6.6" text-anchor="middle" fill="#fff" textLength="11" lengthAdjust="spacingAndGlyphs">NAPA</text><text x="27" y="18.6" font-family="Liberation Sans,sans-serif" font-weight="bold" font-size="8.6" fill="#101010" stroke="#101010" stroke-width=".3" textLength="19" lengthAdjust="spacingAndGlyphs">NAPA</text></svg></div>
<div class="vb" style="left:127px"><i></i><svg viewBox="0 0 54 24"><defs><linearGradient id="atdg" x1="0" x2="1"><stop offset="0" stop-color="#d41c10"/><stop offset=".6" stop-color="#cc2410"/><stop offset="1" stop-color="#e05818"/></linearGradient></defs><text x="26.5" y="18.6" font-family="Liberation Sans,sans-serif" font-weight="bold" font-size="18" text-anchor="middle" fill="url(#atdg)" stroke="#cc2010" stroke-width=".9" textLength="44" lengthAdjust="spacingAndGlyphs">ATD</text><path d="M3 9Q13 6 20 17" stroke="#c0c0c0" stroke-width="2" fill="none"/></svg></div>
<div class="vb" style="left:189px"><i></i><svg viewBox="0 0 54 24"><rect x="9" y="3" width="8" height="3.4" fill="#d82020"/><rect x="19" y="3" width="17" height="3.4" fill="#2070b0"/><rect x="9" y="17.6" width="8" height="3.4" fill="#2070b0"/><rect x="19" y="17.6" width="17" height="3.4" fill="#d82020"/><text x="5.6" y="16" font-family="Liberation Sans,sans-serif" font-weight="bold" font-size="9.5" fill="#d82020" stroke="#d82020" stroke-width=".4" textLength="14" lengthAdjust="spacingAndGlyphs">CAR</text><text x="20" y="16" font-family="Liberation Sans,sans-serif" font-weight="bold" font-size="9.5" fill="#1868a8" stroke="#1868a8" stroke-width=".4" textLength="25" lengthAdjust="spacingAndGlyphs">QUEST</text></svg></div>
<div class="vb plain" style="left:251px;background:#000"><svg viewBox="0 0 54 24" style="left:2px;top:2px"><ellipse cx="27" cy="12" rx="15.5" ry="10.4" fill="none" stroke="#fff" stroke-width="1.5"/><path d="M2 8.4H13M1 11.8H12M2 15.2H13M41 8.4H52M42 11.8H53M41 15.2H52" stroke="#fff" stroke-width="2" stroke-linecap="round"/><text x="27" y="17.2" font-family="Liberation Sans,sans-serif" font-weight="bold" font-size="15" text-anchor="middle" stroke="#000" stroke-width="3.4" fill="#000" textLength="34" lengthAdjust="spacingAndGlyphs">FMP</text><text x="27" y="17.2" font-family="Liberation Sans,sans-serif" font-weight="bold" font-size="15" text-anchor="middle" fill="#fff" stroke="#fff" stroke-width=".7" textLength="34" lengthAdjust="spacingAndGlyphs">FMP</text></svg></div>
<div class="vb plain" style="left:313px;background:#000"><div class="abs" style="left:2px;top:2px;width:54px;height:24px;background:#1462a6;border:1px solid #5a8cc0"></div><svg viewBox="0 0 54 24" style="left:2px;top:2px"><text x="27" y="19.6" font-family="Liberation Serif,serif" font-weight="bold" font-size="21.5" text-anchor="middle" fill="#fff" stroke="#fff" stroke-width="1" textLength="46" lengthAdjust="spacingAndGlyphs">IMC</text></svg></div>
<div class="vb plain" style="left:375px;background:linear-gradient(#cfcfcf,#b4b4b4 40%,#8a8a8a 75%,#7c7c7c);border-radius:3px;box-shadow:inset 1px 1px 1px #e4e4e4,inset -1px -1px 1px #686868"><svg viewBox="0 0 54 24" style="left:2px;top:2px"><path d="M22 1H45L44 5.4H20Z" fill="#b8b8b8"/><path d="M24 1.6H44.6L44 4H23Z" fill="#c05038"/><path d="M18 5.4H43L40 18H14Z" fill="#c8c8c8"/><path d="M14.4 16.6H40.4L39 21H13Z" fill="#4a4a4a"/><text x="28" y="14.6" font-family="Liberation Serif,serif" font-weight="bold" font-style="italic" font-size="9.5" text-anchor="middle" fill="#181818" stroke="#181818" stroke-width=".4" textLength="23" lengthAdjust="spacingAndGlyphs">Mighty</text></svg></div>
<div class="vb" style="left:437px"><i></i><svg viewBox="0 0 54 24"><text x="3" y="16" font-family="Liberation Sans,sans-serif" font-style="italic" font-weight="bold" font-size="13" textLength="46" lengthAdjust="spacingAndGlyphs"><tspan fill="#26264e">ne</tspan><tspan fill="#e03010">x</tspan><tspan fill="#26264e">part</tspan></text><path d="M20 18.4H47L45.4 17M47 18.4L45.4 19.8" stroke="#e03010" stroke-width="1.1" fill="none"/></svg></div>
<div class="vb plain" style="left:499px;background:#fff;border:2px solid #606060;box-shadow:inset 0 0 0 1px #c4c4c4"><svg viewBox="0 0 54 24" style="left:0;top:0"><text x="27" y="9.6" font-family="Liberation Sans,sans-serif" font-weight="bold" font-style="italic" font-size="10" text-anchor="middle" textLength="38" lengthAdjust="spacingAndGlyphs"><tspan fill="#101020">ne</tspan><tspan fill="#e03010">x</tspan><tspan fill="#101020">part</tspan></text><path d="M16 11.4H45" stroke="#e03010" stroke-width="1"/><text x="27" y="20.8" font-family="Liberation Sans,sans-serif" font-weight="bold" font-style="italic" font-size="9" text-anchor="middle" fill="#101020" stroke="#101020" stroke-width=".25" textLength="46" lengthAdjust="spacingAndGlyphs">Multi-Seller</text></svg></div>
<div class="vb plain" style="left:561px;background:#fff;border:1px solid #b4b4b4"><svg viewBox="0 0 54 24" style="left:1px;top:1px;width:56px;height:26px"><text x="27" y="10.6" font-family="Liberation Sans,sans-serif" font-weight="bold" font-style="italic" font-size="10.5" text-anchor="middle" fill="#1830a8" textLength="49" lengthAdjust="spacingAndGlyphs">PARTS</text><text x="27" y="21.4" font-family="Liberation Sans,sans-serif" font-weight="bold" font-style="italic" font-size="11.5" text-anchor="middle" fill="#f06810" textLength="49" lengthAdjust="spacingAndGlyphs">TECH</text></svg></div>
<div class="vb" style="left:623px"><i></i><svg viewBox="0 0 54 24"><rect x="0" y="4" width="52" height="14" fill="#ececec"/><text x="4" y="14.6" font-family="Liberation Sans,sans-serif" font-size="9.6" fill="#2898d8" textLength="27" lengthAdjust="spacingAndGlyphs">repair</text><text x="31" y="14.6" font-family="Liberation Sans,sans-serif" font-size="9.6" fill="#888" textLength="16" lengthAdjust="spacingAndGlyphs">link</text></svg></div>
<div class="vb" style="left:685px"><i></i><svg viewBox="0 0 54 24"><path d="M11 1H43L27 22Z" fill="#f8a828"/><text x="27" y="12" font-family="Liberation Sans,sans-serif" font-weight="bold" font-size="9.5" text-anchor="middle" fill="#fff">SSF</text></svg></div>
<div class="vb" style="left:747px"><i style="background:#f4f4f4"></i><svg viewBox="0 0 54 24"><ellipse cx="39" cy="12" rx="6" ry="10" transform="rotate(20 39 12)" fill="none" stroke="#183878" stroke-width="1.2"/><text x="4" y="17" font-family="Liberation Sans,sans-serif" font-style="italic" font-weight="bold" font-size="12" fill="#f09818" textLength="20" lengthAdjust="spacingAndGlyphs">Tire</text><text x="24" y="18" font-family="Liberation Sans,sans-serif" font-style="italic" font-size="13" fill="#183060" textLength="25" lengthAdjust="spacingAndGlyphs">web</text><circle cx="33.6" cy="4.6" r="1.3" fill="#f0b020"/><circle cx="43.6" cy="19.4" r="1.3" fill="#f0b020"/></svg></div>
<div class="vb plain" style="left:809px;background:#18a8f0;border:1px solid #40c8f8"><div class="abs" style="left:2px;top:17px;width:52px;height:6px;background:#1038a0"></div><svg viewBox="0 0 54 24" style="left:1px;top:1px"><text x="27" y="15.4" font-family="Liberation Sans,sans-serif" font-size="11.5" text-anchor="middle" fill="#fff" textLength="46" lengthAdjust="spacingAndGlyphs">transend</text></svg></div>
<div class="vb" style="left:871px"><i></i><svg viewBox="0 0 54 24"><text x="30" y="10.6" font-family="Liberation Sans,sans-serif" font-weight="bold" font-style="italic" font-size="9" text-anchor="middle" fill="#2040b0" textLength="36" lengthAdjust="spacingAndGlyphs">ACDelco</text><text x="4" y="19.6" font-family="Liberation Sans,sans-serif" font-weight="bold" font-style="italic" font-size="7.5" fill="#b02020" textLength="16" lengthAdjust="spacingAndGlyphs">WISE</text><text x="21" y="19.6" font-family="Liberation Sans,sans-serif" font-weight="bold" font-style="italic" font-size="7.5" fill="#222" textLength="25" lengthAdjust="spacingAndGlyphs">Connect</text><path d="M4 13H22" stroke="#b02020" stroke-width="1"/></svg></div>
<!-- totals -->
<div class="tl" style="left:5px;width:101px"></div><div class="tl" style="left:111px;width:123px"></div><div class="tl" style="left:239px;width:123px"></div><div class="tl" style="left:367px;width:131px"></div><div class="tl" style="left:503px;width:127px"></div>
<div class="tt" style="left:100px;top:43px;width:128px">Parts</div>
<div class="tt" style="left:228px;top:43px;width:128px">Labor</div>
<div class="tt" style="left:364px;top:43px;width:128px">Tax / Fees</div>
<div class="tt" style="left:497px;top:43px;width:128px">Total</div>
<div class="tt" style="left:5px;top:61px;width:100px">Estimate</div>
<div class="tt" style="left:105px;top:61px;width:128px">189.10</div>
<div class="tt" style="left:233px;top:61px;width:128px">207.00</div>
<div class="tt" style="left:369px;top:61px;width:128px">21.55</div>
<div class="tt" style="left:501px;top:61px;width:128px">417.65</div>
</div>
<!-- bottom buttons -->
<div class="btn2" style="left:13px;top:980px;width:84px">Check Profit</div>
<div class="btn2" style="left:104px;top:980px;width:110px">Remove SubEst</div>
<div class="btn2" style="left:221px;top:980px;width:90px">Sell Revision</div>
<div class="btn2" style="left:318px;top:980px;width:106px">Parts Ordering</div>
<div class="btn2" style="left:431px;top:980px;width:86px">ProPack</div>
<div class="btn2" style="left:1597px;top:980px;width:57px">Email</div>
<div class="btn2" style="left:1664px;top:980px;width:54px">Fax</div>
<div class="btn2" style="left:1727px;top:980px;width:48px">Print</div>
<div class="btn2" style="left:1782px;top:980px;width:62px"><u>D</u>etail</div>
<div class="btn2" style="left:1853px;top:980px;width:52px">E<u>x</u>it</div>
<!-- status bar -->
<div id="status">
<span style="left:4px">Ready</span>
<span style="left:1575px">M1SKINT</span>
<span style="left:1650px">Manager SE</span>
<span style="left:1741px">8.5.1.419</span>
<span style="left:1815px">BRYAN</span>
<div class="abs" style="left:1726px;top:2px;width:1px;height:19px;background:#d0d0d0"></div>
<div class="abs" style="left:1800px;top:2px;width:1px;height:19px;background:#d0d0d0"></div>
<svg class="abs" style="left:1877px;top:1px" width="18" height="18" viewBox="0 0 18 18"><rect x="2" y="14.2" width="7.2" height="2.6" fill="#7c7c7c"/><rect x="2.6" y="14.2" width="6" height="1" fill="#d8d8d8"/><ellipse cx="5.4" cy="7.8" rx="3.3" ry="7" transform="rotate(-24 5.4 7.8)" fill="#f6f9fd" stroke="#6c9ce0" stroke-width="1"/><path d="M5.6 7.6L8.6 4.4" stroke="#2058a8" stroke-width="1"/><path d="M9.6 1.4L12.4 6.8M11.8 1.2L13.2 4" stroke="#f01c10" stroke-width="1.2" stroke-dasharray="1.6 .7"/><ellipse cx="13" cy="11.6" rx="3.7" ry="4.7" fill="#e85c0a"/><path d="M11.4 11.4L14.6 13.4M11.6 13.6L14.4 11" stroke="#e81818" stroke-width=".8"/></svg>
</div>
<div class="abs" style="left:118px;top:208px;width:64px;height:64px;border-radius:50%;background:rgba(255,255,0,.33);z-index:20"></div>
<svg class="abs" style="left:145px;top:238px;z-index:21" width="36" height="48" viewBox="-5 -4 36 48"><path d="M0.4 0.8V32L7 26.6L12.6 37.4Q14 39 16 38.2Q18.6 37 18.4 35.2L13.2 24.8L23.6 24Z" fill="#f4f4f4" stroke="#000" stroke-width="2" stroke-linejoin="round"/></svg>
</body>
</html>
